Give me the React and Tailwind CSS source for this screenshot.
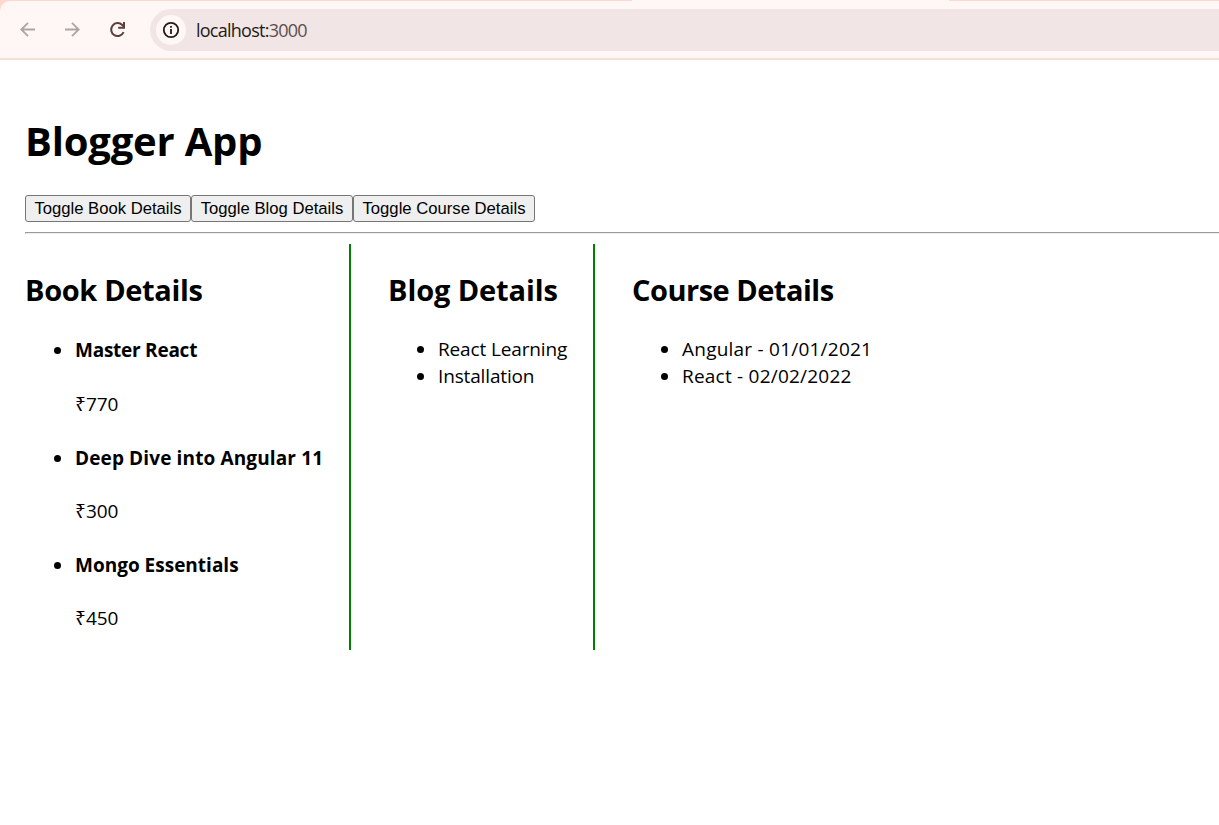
import React, { useState } from "react";

const books = [
  { id: 101, name: "Master React", price: 770, tracking: "tracking-[-0.25px]" },
  { id: 102, name: "Deep Dive into Angular 11", price: 300, tracking: "tracking-[0.13px]" },
  { id: 103, name: "Mongo Essentials", price: 450, tracking: "tracking-[0px]" },
];

const blogs = [
  { title: "React Learning", tracking: "tracking-[-0.14px]" },
  { title: "Installation", tracking: "tracking-[-0.15px]" },
];

const courses = [
  { name: "Angular", date: "01/01/2021", tracking: "tracking-[0.23px]" },
  { name: "React", date: "02/02/2022", tracking: "tracking-[0.22px]" },
];

function BrowserBar() {
  return (
    <header className="bg-[#ffd9cc]">
      <div className="flex h-px justify-start pl-[632px]">
        <div className="w-[317px] bg-[#fff7f5]" />
      </div>
      <div className="flex h-[59px] items-start rounded-tl-[10px] border-b-2 border-[#f4dfd9] bg-[#fff7f5] pt-2">
        <div className="flex h-[42px] w-[150px] shrink-0 items-center pl-[18px]">
          <svg className="h-5 w-5" viewBox="0 0 20 20" fill="none" stroke="#b0a4a2" strokeWidth="1.8">
            <path d="M17 9.5H3.5M10 2.8 3.3 9.5 10 16.2" />
          </svg>
          <svg className="ml-[24px] h-5 w-5" viewBox="0 0 20 20" fill="none" stroke="#b0a4a2" strokeWidth="1.8">
            <path d="M3 9.5h13.5M10 2.8l6.7 6.7-6.7 6.7" />
          </svg>
          <svg className="ml-[26px] h-5 w-5" viewBox="0 0 20 20" fill="none" stroke="#5b4039" strokeWidth="2">
            <path d="M15.6 12.2A6.5 6.5 0 1 1 14.3 5L16 6.7" />
            <path d="M16 2v5.8h-5.8" />
          </svg>
        </div>
        <div className="flex h-[42px] grow items-center rounded-l-full bg-[#f1e6e5] pl-1.5">
          <span className="flex h-[30px] w-[30px] items-center justify-center rounded-full bg-[#fff7f5]">
            <svg className="h-[18px] w-[18px]" viewBox="0 0 18 18" fill="none" stroke="#231a18" strokeWidth="1.8">
              <circle cx="9" cy="9" r="7.2" />
              <path d="M9 8v5M9 5v1.8" />
            </svg>
          </span>
          <span className="ml-[10px] whitespace-nowrap text-[18px] leading-6 tracking-[-0.75px] text-[#231a18]">
            localhost:<span className="text-[#5c4f4d]">3000</span>
          </span>
        </div>
      </div>
    </header>
  );
}

function ToggleButton({ width, onClick, children }) {
  return (
    <button
      onClick={onClick}
      className={`${width} h-[27px] whitespace-nowrap rounded-[3px] border border-[#767676] bg-[#efefef] font-['Liberation_Sans',Arial,sans-serif] text-[16.67px] leading-[25px]`}
    >
      {children}
    </button>
  );
}

function Heading({ tracking, children }) {
  return (
    <h2 className={`${tracking} mt-[26px] mb-[26px] text-[29px] leading-[40px] font-bold`}>{children}</h2>
  );
}

export default function App() {
  const [shown, setShown] = useState({ book: true, blog: true, course: true });
  const toggle = (key) => setShown((s) => ({ ...s, [key]: !s[key] }));

  return (
    <div className="min-h-screen overflow-hidden bg-white font-['Open_Sans','Noto_Sans',sans-serif] text-[19px] leading-[27px] text-black">
      <BrowserBar />
      <main className="pt-[54px] pl-[25px]">
        <h1 className="text-[40px] leading-[54px] font-bold tracking-[-0.2px]">Blogger App</h1>
        <div className="mt-[27px] flex">
          <ToggleButton width="w-[166px]" onClick={() => toggle("book")}>Toggle Book Details</ToggleButton>
          <ToggleButton width="w-[162px]" onClick={() => toggle("blog")}>Toggle Blog Details</ToggleButton>
          <ToggleButton width="w-[182px]" onClick={() => toggle("course")}>Toggle Course Details</ToggleButton>
        </div>
        <hr className="mt-[10px] h-0.5 border-t border-b border-l border-[#9a9a9a] border-b-[#eeeeee]" />
        <div className="mt-[10px] flex h-[406px] whitespace-nowrap">
          {shown.book && (
            <section className="w-[326px] border-r-2 border-[#008000]">
              <Heading tracking="tracking-[-0.35px]">Book Details</Heading>
              <ul className="list-disc pt-[1.3px] pl-[49px]">
                {books.map((book) => (
                  <li key={book.id} className="mb-[27.1px] pl-px">
                    <h3 className={`${book.tracking} font-bold`}>{book.name}</h3>
                    <p className="mt-[26.3px]">₹{book.price}</p>
                  </li>
                ))}
              </ul>
            </section>
          )}
          {shown.blog && (
            <section className="w-[244px] border-r-2 border-[#008000] pl-[37px]">
              <Heading tracking="tracking-[-0.1px]">Blog Details</Heading>
              <ul className="list-disc pl-[49px]">
                {blogs.map((blog) => (
                  <li key={blog.title} className={`${blog.tracking} pl-px`}>{blog.title}</li>
                ))}
              </ul>
            </section>
          )}
          {shown.course && (
            <section className="pl-[37px]">
              <Heading tracking="tracking-[-0.5px]">Course Details</Heading>
              <ul className="list-disc pl-[49px]">
                {courses.map((course) => (
                  <li key={course.name} className={`${course.tracking} pl-px`}>{`${course.name} - ${course.date}`}</li>
                ))}
              </ul>
            </section>
          )}
        </div>
      </main>
    </div>
  );
}
